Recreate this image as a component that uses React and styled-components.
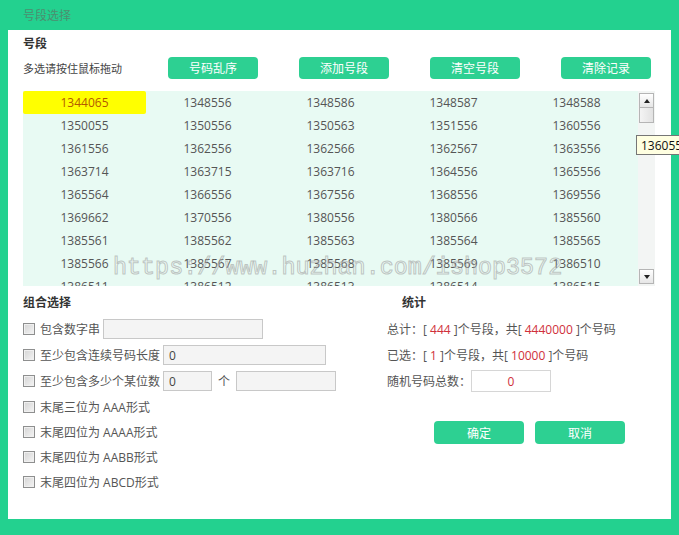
import styled, { createGlobalStyle } from 'styled-components';

const GlobalStyle = createGlobalStyle`
  html, body {
    margin: 0;
    padding: 0;
    background: #ffffff;
  }
  body {
    font-family: "Open Sans", "Noto Sans CJK SC", sans-serif;
    font-size: 12px;
    color: #555;
  }
`;

const GREEN = '#23d18f';

const numbers = [
  ['1344065', '1348556', '1348586', '1348587', '1348588'],
  ['1350055', '1350556', '1350563', '1351556', '1360556'],
  ['1361556', '1362556', '1362566', '1362567', '1363556'],
  ['1363714', '1363715', '1363716', '1364556', '1365556'],
  ['1365564', '1366556', '1367556', '1368556', '1369556'],
  ['1369662', '1370556', '1380556', '1380566', '1385560'],
  ['1385561', '1385562', '1385563', '1385564', '1385565'],
  ['1385566', '1385567', '1385568', '1385569', '1386510'],
  ['1386511', '1386512', '1386513', '1386514', '1386515'],
];

const Frame = styled.div`
  position: relative;
  width: 679px;
  height: 535px;
  box-sizing: border-box;
  background: ${GREEN};
  padding: 0 8px 16px 8px;
  display: flex;
  flex-direction: column;
  overflow: hidden;
`;

const TitleBar = styled.div`
  height: 30px;
  display: flex;
  align-items: center;
  padding-left: 15px;
  color: #4c8f70;
  font-size: 12px;
`;

const Panel = styled.div`
  flex: 1;
  background: #ffffff;
  padding: 6px 16px 0 15px;
  display: flex;
  flex-direction: column;
`;

const SectionTitle = styled.div`
  line-height: 16px;
  font-weight: bold;
  color: #333;
  font-size: 12px;
  padding-left: ${({ indent }) => indent || 0}px;
`;

const Toolbar = styled.div`
  margin-top: 5px;
  height: 22px;
  display: flex;
  align-items: center;
  gap: 41px;
`;

const Hint = styled.div`
  width: 104px;
  font-size: 11px;
  color: #444;
`;

const GreenButton = styled.button`
  width: 90px;
  height: ${({ tall }) => (tall ? 23 : 22)}px;
  border: none;
  border-radius: 4px;
  background: #2dd092;
  color: #ffffff;
  font-family: "Open Sans", "Noto Sans CJK SC", sans-serif;
  font-size: 12px;
  padding: 0;
`;

const ListWrap = styled.div`
  margin-top: 12px;
  display: flex;
  height: 195px;
`;

const NumberGrid = styled.div`
  width: 615px;
  height: 195px;
  overflow: hidden;
  background: #e8faf3;
  display: grid;
  grid-template-columns: repeat(5, 123px);
  grid-auto-rows: 23px;
`;

const Cell = styled.div`
  display: flex;
  align-items: center;
  justify-content: center;
  font-size: 12px;
  color: ${({ selected }) => (selected ? '#b35a00' : '#555')};
  background: ${({ selected }) => (selected ? '#ffff00' : 'transparent')};
  border-radius: ${({ selected }) => (selected ? '2px' : '0')};
`;

const Scrollbar = styled.div`
  width: 17px;
  background: #f3f5f4;
  display: flex;
  flex-direction: column;
  align-items: center;
  padding: 2px 0;
  box-sizing: border-box;
`;

const ScrollButton = styled.div`
  width: 15px;
  height: 15px;
  box-sizing: border-box;
  border: 1px solid #b5b5b5;
  background: linear-gradient(#ffffff, #e6e6e6);
  display: flex;
  align-items: center;
  justify-content: center;
  margin-top: ${({ bottom }) => (bottom ? 'auto' : '0')};
`;

const Thumb = styled.div`
  width: 15px;
  height: 15px;
  box-sizing: border-box;
  border: 1px solid #b5b5b5;
  border-top: none;
  background: linear-gradient(90deg, #f4f4f4, #e2e2e2);
`;

const Arrow = styled.span`
  width: 0;
  height: 0;
  border-left: 3.5px solid transparent;
  border-right: 3.5px solid transparent;
  ${({ down }) =>
    down ? 'border-top: 4px solid #222;' : 'border-bottom: 4px solid #222;'}
`;

const Bottom = styled.div`
  margin-top: 9px;
  display: grid;
  grid-template-columns: 364px 1fr;
`;

const Column = styled.div`
  display: flex;
  flex-direction: column;
`;

const OptionList = styled.div`
  margin-top: 5px;
  display: flex;
  flex-direction: column;
`;

const OptionRow = styled.label`
  height: ${({ plain }) => (plain ? 25 : 26)}px;
  display: flex;
  align-items: center;
  color: #555;
  font-size: 12px;
`;

const Check = styled.span`
  width: 12px;
  height: 12px;
  box-sizing: border-box;
  border: 1px solid #8e8f8f;
  background: linear-gradient(135deg, #d4d4d4, #f4f4f4);
  box-shadow: inset 0 0 0 1px #f0f0f0;
  margin-right: 5px;
`;

const Field = styled.div`
  width: ${({ w }) => w}px;
  height: 20px;
  box-sizing: border-box;
  border: 1px solid #c8c8c8;
  background: #f4f4f4;
  margin-left: ${({ ml }) => ml ?? 3}px;
  display: flex;
  align-items: center;
  padding-left: 5px;
  color: #444;
`;

const Unit = styled.span`
  margin-left: 6px;
`;

const Stats = styled.div`
  margin-top: 5px;
  display: flex;
  flex-direction: column;
`;

const StatLine = styled.div`
  height: 26px;
  display: flex;
  align-items: center;
  color: #555;
  white-space: pre;
`;

const Red = styled.span`
  color: #d0303a;
`;

const CountBox = styled.div`
  width: 80px;
  height: 22px;
  box-sizing: border-box;
  border: 1px solid #d6d6d6;
  background: #fff;
  display: flex;
  align-items: center;
  justify-content: center;
  color: #d0303a;
  font-size: 12px;
`;

const Actions = styled.div`
  margin-top: 27px;
  padding-left: 47px;
  display: flex;
  gap: 11px;
`;

const Tooltip = styled.div`
  position: absolute;
  left: 636px;
  top: 135px;
  height: 20px;
  padding: 0 4px;
  box-sizing: border-box;
  border: 1px solid #767676;
  background: #ffffe1;
  color: #111;
  font-size: 12px;
  display: flex;
  align-items: center;
`;

const Watermark = styled.div`
  position: absolute;
  left: 113px;
  top: 255px;
  font-family: "Liberation Mono", monospace;
  font-size: 23.4px;
  color: rgba(255, 255, 255, 0.2);
  -webkit-text-stroke: 1px rgba(150, 150, 150, 0.55);
  pointer-events: none;
  white-space: nowrap;
`;

const options = [
  { label: '包含数字串', fields: [{ w: 160, ml: 3 }] },
  { label: '至少包含连续号码长度', fields: [{ w: 163, ml: 3, value: '0' }] },
  {
    label: '至少包含多少个某位数',
    fields: [{ w: 49, ml: 3, value: '0' }],
    unit: '个',
    extra: { w: 100, ml: 6 },
  },
  { label: '末尾三位为 AAA形式' },
  { label: '末尾四位为 AAAA形式' },
  { label: '末尾四位为 AABB形式' },
  { label: '末尾四位为 ABCD形式' },
];

export default function App() {
  return (
    <>
      <GlobalStyle />
      <Frame>
        <TitleBar>号段选择</TitleBar>
        <Panel>
          <SectionTitle>号段</SectionTitle>
          <Toolbar>
            <Hint>多选请按住鼠标拖动</Hint>
            <GreenButton>号码乱序</GreenButton>
            <GreenButton>添加号段</GreenButton>
            <GreenButton>清空号段</GreenButton>
            <GreenButton>清除记录</GreenButton>
          </Toolbar>
          <ListWrap>
            <NumberGrid>
              {numbers.flat().map((n, i) => (
                <Cell key={n} selected={i === 0}>
                  {n}
                </Cell>
              ))}
            </NumberGrid>
            <Scrollbar>
              <ScrollButton>
                <Arrow />
              </ScrollButton>
              <Thumb />
              <ScrollButton bottom>
                <Arrow down />
              </ScrollButton>
            </Scrollbar>
          </ListWrap>
          <Bottom>
            <Column>
              <SectionTitle>组合选择</SectionTitle>
              <OptionList>
                {options.map((o) => (
                  <OptionRow key={o.label} plain={!o.fields}>
                    <Check />
                    {o.label}
                    {o.fields &&
                      o.fields.map((f, i) => (
                        <Field key={i} w={f.w} ml={f.ml}>
                          {f.value}
                        </Field>
                      ))}
                    {o.unit && <Unit>{o.unit}</Unit>}
                    {o.extra && <Field w={o.extra.w} ml={o.extra.ml} />}
                  </OptionRow>
                ))}
              </OptionList>
            </Column>
            <Column>
              <SectionTitle indent={15}>统计</SectionTitle>
              <Stats>
                <StatLine>
                  总计：[ <Red>444</Red> ]个号段，共[ <Red>4440000</Red> ]个号码
                </StatLine>
                <StatLine>
                  已选：[ <Red>1</Red> ]个号段，共[ <Red>10000</Red> ]个号码
                </StatLine>
                <StatLine>
                  随机号码总数：
                  <CountBox>0</CountBox>
                </StatLine>
              </Stats>
              <Actions>
                <GreenButton tall>确定</GreenButton>
                <GreenButton tall>取消</GreenButton>
              </Actions>
            </Column>
          </Bottom>
        </Panel>
        <Tooltip>1360556</Tooltip>
        <Watermark>https://www.huzhan.com/ishop3572</Watermark>
      </Frame>
    </>
  );
}
